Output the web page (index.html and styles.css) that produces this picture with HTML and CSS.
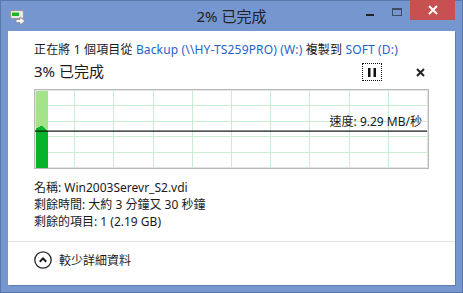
FILE: index.html
```html
<!DOCTYPE html>
<html lang="zh-Hant">
<head>
  <meta charset="UTF-8">
  <title>2% 已完成</title>
  <link rel="stylesheet" href="styles.css">
</head>
<body>
  <div class="window">
    <div class="titlebar">
      <div class="title-left">
        <svg class="app-icon" width="16" height="15" viewBox="0 0 16 15">
          <rect x="0.5" y="0.5" width="13" height="8" rx="1.5" fill="#e8e8e8" stroke="#9a9a9a"/>
          <rect x="2" y="3" width="7" height="3" fill="#16b52c"/>
          <rect x="2" y="2" width="7" height="1" fill="#7fe07a"/>
          <path d="M6 9.5 h4 v-2.5 l5 4 l-5 4 v-2.5 h-4 z" fill="#f4f4f4" stroke="#8c8c8c" stroke-width="0.8"/>
        </svg>
      </div>
      <div class="title-text">2% 已完成</div>
      <div class="title-right">
        <span class="btn-min"></span>
        <span class="btn-max"></span>
        <span class="btn-close">
          <svg width="10" height="10" viewBox="0 0 10 10">
            <path d="M1 1 L9 9 M9 1 L1 9" stroke="#fff" stroke-width="2"/>
          </svg>
        </span>
      </div>
    </div>

    <div class="client">
      <div class="main">
        <p class="status-line">正在將 1 個項目從 <span class="link">Backup (\\HY-TS259PRO) (W:)</span> 複製到 <span class="link">SOFT (D:)</span></p>

        <div class="progress-head">
          <h2 class="percent">3% 已完成</h2>
          <div class="actions">
            <span class="pause-btn">
              <svg width="8" height="9" viewBox="0 0 8 9"><rect x="0" y="0" width="2.5" height="9" fill="#111"/><rect x="5.5" y="0" width="2.5" height="9" fill="#111"/></svg>
            </span>
            <span class="cancel-btn">
              <svg width="9" height="9" viewBox="0 0 9 9"><path d="M1 1 L8 8 M8 1 L1 8" stroke="#222" stroke-width="2"/></svg>
            </span>
          </div>
        </div>

        <div class="graph">
          <svg width="393" height="78" viewBox="0 0 393 78">
            <g stroke="#c9eed4" stroke-width="1">
              <path d="M0 15.5 H393 M0 31.5 H393 M0 46.5 H393 M0 62.5 H393"/>
              <path d="M39.5 0 V78 M78.5 0 V78 M118.5 0 V78 M157.5 0 V78 M196.5 0 V78 M235.5 0 V78 M274.5 0 V78 M314.5 0 V78 M353.5 0 V78"/>
            </g>
            <rect x="1" y="1" width="12" height="77" fill="#a3e38b"/>
            <path d="M1 38 H3 V37 H5 V36 H8 V37 H9 V38 H10 V39 H11 V40 H12 V41 H13 V78 H1 Z" fill="#08b22a"/>
            <rect x="0" y="40.5" width="392" height="1.2" fill="#111"/>
          </svg>
          <span class="speed">速度: 9.29 MB/秒</span>
        </div>

        <ul class="details">
          <li>名稱: Win2003Serevr_S2.vdi</li>
          <li>剩餘時間: 大約 3 分鐘又 30 秒鐘</li>
          <li>剩餘的項目: 1 (2.19 GB)</li>
        </ul>
      </div>

      <div class="footer">
        <span class="toggle-icon">
          <svg width="18" height="18" viewBox="0 0 18 18">
            <circle cx="9" cy="9" r="8.2" fill="none" stroke="#2a2a2a" stroke-width="1.3"/>
            <path d="M5.8 10.8 L9 7.4 L12.2 10.8" fill="none" stroke="#1a1a1a" stroke-width="2"/>
          </svg>
        </span>
        <span>較少詳細資料</span>
      </div>
    </div>
  </div>
</body>
</html>
```

FILE: styles.css
```css
html, body {
  margin: 0;
  padding: 0;
}

body {
  width: 463px;
  height: 293px;
  overflow: hidden;
  font-family: "Noto Sans", "Noto Sans CJK TC", sans-serif;
  font-size: 12px;
  color: #1a1a1a;
}

.window {
  box-sizing: border-box;
  width: 463px;
  height: 293px;
  background-color: #7596cf;
  border: 1px solid #5b78ad;
  padding: 0 7px 7px 7px;
  display: flex;
  flex-direction: column;
}

.titlebar {
  height: 30px;
  display: grid;
  grid-template-columns: 1fr auto 1fr;
  align-items: start;
}

.title-left {
  padding: 9px 0 0 2px;
}

.app-icon {
  display: block;
}

.title-text {
  font-size: 15px;
  line-height: 30px;
  color: #222;
}

.title-right {
  display: flex;
  justify-content: flex-end;
  align-items: flex-start;
}

.btn-min {
  width: 8px;
  height: 2px;
  background-color: #222;
  margin: 13px 18px 0 0;
}

.btn-max {
  box-sizing: border-box;
  width: 10px;
  height: 8px;
  border: 1px solid #3e4c66;
  border-top-width: 2px;
  margin: 7px 8px 0 0;
}

.btn-close {
  width: 45px;
  height: 20px;
  margin-top: -1px;
  background-color: #c75050;
  display: flex;
  align-items: center;
  justify-content: center;
}

.client {
  flex: 1;
  background-color: #fff;
  box-shadow: 1px 1px 0 #5f7cb2;
  display: flex;
  flex-direction: column;
}

.main {
  padding: 10px 0 0 26px;
  height: 211px;
  box-sizing: border-box;
  border-bottom: 1px solid #e3e3e3;
}

.status-line {
  margin: 0;
  line-height: 17px;
  letter-spacing: 0.15px;
}

.link {
  color: #1e64c8;
}

.progress-head {
  display: flex;
  align-items: center;
  height: 20px;
  margin-top: 4px;
}

.percent {
  margin: 0;
  font-size: 15px;
  font-weight: normal;
  flex: 1;
  position: relative;
  top: -2px;
}

.actions {
  display: flex;
  align-items: center;
  padding-right: 30px;
}

.pause-btn {
  box-sizing: border-box;
  width: 20px;
  height: 18px;
  border: 1px dotted #111;
  display: flex;
  align-items: center;
  justify-content: center;
  margin-right: 34px;
}

.cancel-btn {
  display: flex;
}

.graph {
  position: relative;
  width: 393px;
  height: 78px;
  margin-top: 7px;
  border: 1px solid #b8b8b8;
  box-shadow: inset 0 0 0 1px #e4e4e4;
}

.graph svg {
  display: block;
}

.speed {
  position: absolute;
  right: 6px;
  top: 23px;
  line-height: 17px;
}

.details {
  list-style: none;
  margin: 10px 0 0 0;
  padding: 0;
}

.details li {
  line-height: 17px;
}

.footer {
  display: flex;
  align-items: center;
  gap: 7px;
  padding: 9px 0 0 26px;
}

.toggle-icon {
  display: flex;
}
```
